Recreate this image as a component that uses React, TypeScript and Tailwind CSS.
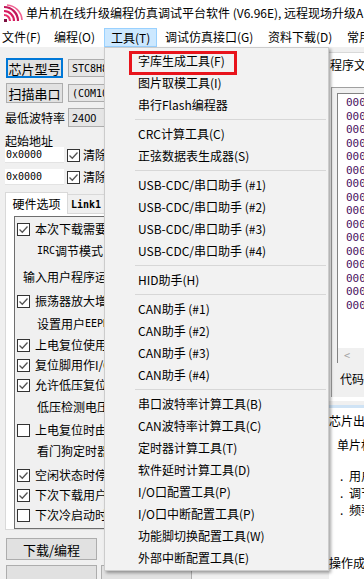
import React from 'react';

const menuItems: (string | null)[] = [
  '字库生成工具(F)',
  '图片取模工具(I)',
  '串行Flash编程器',
  null,
  'CRC计算工具(C)',
  '正弦数据表生成器(S)',
  null,
  'USB-CDC/串口助手 (#1)',
  'USB-CDC/串口助手 (#2)',
  'USB-CDC/串口助手 (#3)',
  'USB-CDC/串口助手 (#4)',
  null,
  'HID助手(H)',
  null,
  'CAN助手 (#1)',
  'CAN助手 (#2)',
  'CAN助手 (#3)',
  'CAN助手 (#4)',
  null,
  '串口波特率计算工具(B)',
  'CAN波特率计算工具(C)',
  '定时器计算工具(T)',
  '软件延时计算工具(D)',
  'I/O口配置工具(P)',
  'I/O口中断配置工具(P)',
  '功能脚切换配置工具(W)',
  '外部中断配置工具(E)',
];

type Opt = { kind: 'check' | 'text'; checked?: boolean; text: React.ReactNode; mt: string; indent?: string };

const mono = "font-['DejaVu_Sans_Mono','Noto_Sans_CJK_SC',monospace] text-[10px]";

const options: Opt[] = [
  { kind: 'check', checked: true, text: '本次下载需要重新设置', mt: 'mt-[2px]' },
  { kind: 'text', text: <><span className={mono}>IRC</span>调节模式</>, mt: 'mt-[2px]', indent: 'pl-[20px]' },
  { kind: 'text', text: '输入用户程序运行时', mt: 'mt-[6px]', indent: 'pl-[6px]' },
  { kind: 'check', checked: true, text: '振荡器放大增益', mt: 'mt-[4px]' },
  { kind: 'text', text: <>设置用户<span className={mono}>EEPROM</span></>, mt: 'mt-[3px]', indent: 'pl-[20px]' },
  { kind: 'check', checked: true, text: '上电复位使用较长延时', mt: 'mt-[1px]' },
  { kind: 'check', checked: true, text: '复位脚用作I/O口', mt: 'mt-0' },
  { kind: 'check', checked: true, text: '允许低压复位', mt: 'mt-0' },
  { kind: 'text', text: '低压检测电压', mt: 'mt-[2px]', indent: 'pl-[20px]' },
  { kind: 'check', checked: false, text: '上电复位时由硬件', mt: 'mt-[3px]' },
  { kind: 'text', text: '看门狗定时器分频', mt: 'mt-[1px]', indent: 'pl-[20px]' },
  { kind: 'check', checked: true, text: '空闲状态时停止', mt: 'mt-[4px]' },
  { kind: 'check', checked: true, text: '下次下载用户程序', mt: 'mt-0' },
  { kind: 'check', checked: false, text: '下次冷启动时', mt: 'mt-0' },
];

function CheckBox({ checked }: { checked: boolean }) {
  return (
    <span className="flex h-[13px] w-[13px] shrink-0 items-center justify-center border border-[#333333] bg-white">
      {checked && (
        <svg width="11" height="11" viewBox="0 0 11 11">
          <path d="M1.5 5.5 L4.3 8.3 L9.5 2.5" fill="none" stroke="#555" strokeWidth="1.3" />
        </svg>
      )}
    </span>
  );
}

function AppIcon() {
  return (
    <svg width="20" height="18" viewBox="0 0 20 18" className="shrink-0">
      <rect x="1" y="15" width="3" height="3" fill="#7a1040" />
      <path d="M1 11 A6 6 0 0 1 7 17" fill="none" stroke="#e8306e" strokeWidth="2.2" />
      <path d="M1 7 A10 10 0 0 1 11 17" fill="none" stroke="#d81b60" strokeWidth="2.2" />
      <path d="M1 3 A14 14 0 0 1 15 17" fill="none" stroke="#c2185b" strokeWidth="2.2" />
      <path d="M4 1 A16 16 0 0 1 19 16" fill="none" stroke="#f06292" strokeWidth="1.6" />
    </svg>
  );
}

export default function App() {
  return (
    <div className="relative h-[579px] w-[364px] overflow-hidden bg-[#f0f0f0] font-['Noto_Sans_CJK_SC','Noto_Sans',sans-serif] text-[12px] text-black">
      {/* title bar */}
      <div className="flex h-[26px] items-center whitespace-nowrap bg-white pl-[3px]">
        <AppIcon />
        <span className="ml-[3px] shrink-0 leading-none">单片机在线升级编程仿真调试平台软件 (V6.96E), 远程现场升级A</span>
      </div>

      {/* menu bar */}
      <div className="flex h-[21px] whitespace-nowrap bg-white leading-none">
        <span className="flex w-[52px] shrink-0 items-center pl-[2px]">文件(F)</span>
        <span className="flex w-[52px] shrink-0 items-center pl-[2px]">编程(O)</span>
        <span className="mt-[2px] flex w-[53px] shrink-0 items-center border border-[#99d1ff] bg-[#cce8ff] pl-[6px]">工具(T)</span>
        <span className="flex w-[106px] shrink-0 items-center pl-[8px]">调试仿真接口(G)</span>
        <span className="flex w-[79px] shrink-0 items-center pl-[5px]">资料下载(D)</span>
        <span className="flex shrink-0 items-center pl-[5px]">常用设置</span>
      </div>

      {/* body */}
      <div className="flex h-[532px]">
        {/* left column */}
        <div className="flex w-[329px] shrink-0 flex-col overflow-hidden whitespace-nowrap">
          <div className="mt-[11px] flex h-[20px] items-center pl-[6px]">
            <button className="flex h-[20px] w-[57px] shrink-0 items-center justify-center border-2 border-[#0078d7] bg-[#e1e1e1] text-[13px] leading-none">芯片型号</button>
            <div className={`ml-[5px] flex h-[18px] w-[150px] shrink-0 items-center border border-[#adadad] bg-[#e5e5e5] pl-[3px] ${mono}`}>STC8H8K64U</div>
          </div>
          <div className="mt-[5px] flex h-[20px] items-center pl-[6px]">
            <button className="flex h-[20px] w-[57px] shrink-0 items-center justify-center border border-[#adadad] bg-[#e1e1e1] text-[13px] leading-none">扫描串口</button>
            <div className={`ml-[5px] flex h-[18px] w-[150px] shrink-0 items-center border border-[#adadad] bg-[#e5e5e5] pl-[3px] ${mono}`}>(COM10) USB-SERIAL</div>
          </div>
          <div className="mt-[5px] flex h-[19px] items-center pl-[5px]">
            <span className="w-[63px] shrink-0 leading-none">最低波特率</span>
            <div className="flex h-[19px] w-[80px] shrink-0 items-center border border-[#adadad] bg-[#e5e5e5] pl-[3px] text-[11px] leading-none">2400</div>
          </div>
          <div className="mt-[8px] flex h-[16px] items-center pl-[5px] leading-none">起始地址</div>
          <div className="flex h-[16px] items-center pl-[5px]">
            <div className={`flex h-[16px] w-[59px] shrink-0 items-center border-b border-[#e3e3e3] bg-white pl-[1px] ${mono}`}>0x0000</div>
            <span className="ml-[3px] shrink-0"><CheckBox checked /></span>
            <span className="ml-[3px] shrink-0 leading-none">清除代码缓冲区</span>
          </div>
          <div className="mt-[6px] flex h-[16px] items-center pl-[5px]">
            <div className={`flex h-[16px] w-[59px] shrink-0 items-center border-b border-[#e3e3e3] bg-white pl-[1px] ${mono}`}>0x0000</div>
            <span className="ml-[3px] shrink-0"><CheckBox checked /></span>
            <span className="ml-[3px] shrink-0 leading-none">清除EEPROM缓冲区</span>
          </div>

          {/* tabs */}
          <div className="mt-[7px] flex h-[22px] items-end pl-[5px]">
            <div className="relative z-10 -mb-px flex h-[22px] w-[63px] shrink-0 items-center justify-center border border-b-0 border-[#d9d9d9] bg-white leading-none">硬件选项</div>
            <div className="flex h-[19px] shrink-0 items-center border border-b-0 border-l-0 border-[#d9d9d9] bg-[#f0f0f0] px-[3px] font-['DejaVu_Sans_Mono',monospace] text-[10px] font-bold">Link1 ID</div>
          </div>
          <div className="ml-[5px] flex h-[322px] flex-col border border-[#d9d9d9] bg-white pl-[8px] pt-[2px]">
            <div className="flex h-[313px] flex-col border border-[#6e6e6e] bg-[#f0f0f0] pl-[2px]">
              {options.map((o, i) =>
                o.kind === 'check' ? (
                  <div key={i} className={`flex h-[20px] items-center ${o.mt}`}>
                    <CheckBox checked={!!o.checked} />
                    <span className="ml-[5px] shrink-0 leading-none">{o.text}</span>
                  </div>
                ) : (
                  <div key={i} className={`flex h-[20px] items-center leading-none ${o.mt} ${o.indent}`}>
                    {o.text}
                  </div>
                )
              )}
            </div>
          </div>

          <div className="mt-[8px] pl-[6px]">
            <button className="flex h-[22px] w-[91px] items-center justify-center border border-[#adadad] bg-[#e1e1e1] text-[13px] leading-none">下载/编程</button>
          </div>
          <div className="mt-[5px] flex gap-[4px] pl-[6px]">
            <div className="h-[20px] w-[91px] shrink-0 border border-[#adadad] bg-[#e1e1e1]" />
            <div className="h-[20px] w-[91px] shrink-0 border border-[#adadad] bg-[#e1e1e1]" />
          </div>
        </div>

        {/* right column */}
        <div className="flex min-w-0 flex-1 flex-col overflow-hidden whitespace-nowrap">
          <div className="mt-[5px] flex h-[24px] items-center border-t border-[#d9d9d9] bg-white pl-[1px] leading-none">程序文件</div>
          <div className="flex h-[325px] flex-col bg-white pl-[2px] pt-[11px]">
            <div className="flex h-[310px] flex-col border-l border-t border-[#a0a0a0] bg-[#f0f0f0] pl-[5px] pt-[5px]">
              <div className="flex h-[270px] flex-col border-l border-t border-[#828282] bg-white">
                <div className="flex h-[254px] flex-col pl-[8px] pt-[2px] text-[#4a1060]">
                  {Array.from({ length: 16 }).map((_, i) => (
                    <div key={i} className={`h-[13.5px] leading-[13.5px] ${mono} text-[11px]`}>000000</div>
                  ))}
                </div>
                <div className="flex h-[15px] items-center bg-[#f0f0f0] pl-[6px] text-[11px] leading-none text-[#a0a0a0]">&lt;</div>
              </div>
              <div className="mt-[10px] pl-[3px] leading-none">代码</div>
            </div>
          </div>
          <div className="mt-[4px] h-[3px] bg-[#cfe3f5]" />
          <div className="flex flex-1 flex-col bg-white leading-none">
            <div className="mt-[7px]">芯片出厂序列号</div>
            <div className="mt-[12px] pl-[8px]">单片机型号</div>
            <div className="mt-[19px] flex pl-[11px]"><span className="w-[9px] shrink-0">.</span>用户</div>
            <div className="mt-[5px] flex pl-[11px]"><span className="w-[9px] shrink-0">.</span>调节</div>
            <div className="mt-[5px] flex pl-[11px]"><span className="w-[9px] shrink-0">.</span>频率</div>
            <div className="mt-[41px]">操作成功</div>
          </div>
        </div>
      </div>

      {/* tools dropdown */}
      <div className="absolute left-[104px] top-[47px] flex h-[524px] w-[225px] flex-col border border-[#cccccc] bg-[#f2f2f2] pt-[2px] shadow-[2px_2px_3px_rgba(0,0,0,0.35)]">
        {menuItems.map((m, i) =>
          m === null ? (
            <div key={i} className="flex h-[7px] shrink-0 items-center pl-[30px] pr-[2px]">
              <div className="h-px w-full bg-[#d7d7d7]" />
            </div>
          ) : (
            <div key={i} className="flex h-[22px] shrink-0 items-center whitespace-nowrap pl-[33px] leading-none">
              {m}
            </div>
          )
        )}
        <div className="pointer-events-none absolute left-[24px] top-[3px] h-[24px] w-[108px] border-[3px] border-[#e8141c]" />
      </div>
    </div>
  );
}
